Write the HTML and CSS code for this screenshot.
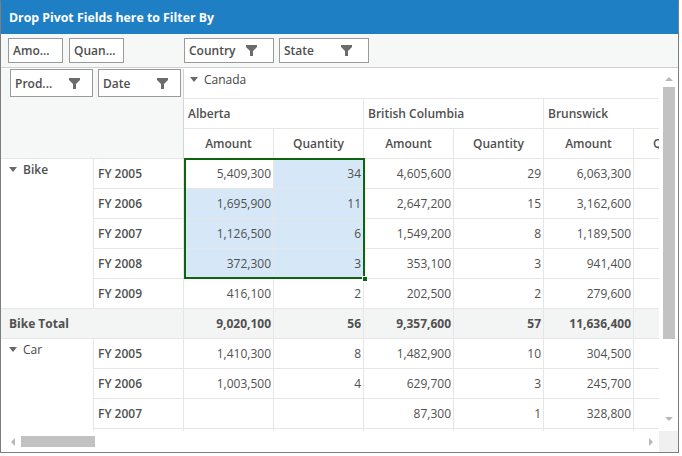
FILE: index.html
```html
<!DOCTYPE html>
<html>
<head>
<meta charset="utf-8">
<link rel="stylesheet" href="styles.css">
</head>
<body>
<div class="pivot">
  <div class="hdr">Drop Pivot Fields here to Filter By</div>
  <div class="filters">
    <div class="grp data-grp">
      <span class="fld w55">Amo...</span>
      <span class="fld w55">Quan...</span>
    </div>
    <div class="grp col-grp">
      <span class="fld w90">Country<svg class="funnel" viewBox="0 0 11 11"><path d="M0 0H11V2L7 6V11H4V6L0 2Z"/></svg></span>
      <span class="fld w90">State<svg class="funnel" viewBox="0 0 11 11"><path d="M0 0H11V2L7 6V11H4V6L0 2Z"/></svg></span>
    </div>
  </div>
  <div class="body">
    <div class="main">
      <div class="viewport">
        <table class="grid">
          <colgroup>
            <col class="c1"><col class="c2">
            <col class="cn"><col class="cn"><col class="cn"><col class="cn"><col class="cn"><col class="cn">
          </colgroup>
          <tr class="r30">
            <td class="corner" rowspan="3" colspan="2">
              <div class="rowflds">
                <span class="fld w83">Prod...<svg class="funnel" viewBox="0 0 11 11"><path d="M0 0H11V2L7 6V11H4V6L0 2Z"/></svg></span>
                <span class="fld w83">Date<svg class="funnel" viewBox="0 0 11 11"><path d="M0 0H11V2L7 6V11H4V6L0 2Z"/></svg></span>
              </div>
            </td>
            <td class="country" colspan="6"><span class="tri"></span>Canada</td>
          </tr>
          <tr class="r30">
            <td class="state" colspan="2">Alberta</td>
            <td class="state" colspan="2">British Columbia</td>
            <td class="state" colspan="2">Brunswick</td>
          </tr>
          <tr class="r30">
            <td class="meas">Amount</td><td class="meas">Quantity</td>
            <td class="meas">Amount</td><td class="meas">Quantity</td>
            <td class="meas">Amount</td><td class="meas">Quantity</td>
          </tr>
          <tr class="r30">
            <td class="prod" rowspan="5"><span class="tri"></span>Bike</td>
            <td class="yr">FY 2005</td>
            <td class="num">5,409,300</td><td class="num sel">34</td>
            <td class="num">4,605,600</td><td class="num">29</td>
            <td class="num">6,063,300</td><td class="num"></td>
          </tr>
          <tr class="r30">
            <td class="yr">FY 2006</td>
            <td class="num sel">1,695,900</td><td class="num sel">11</td>
            <td class="num">2,647,200</td><td class="num">15</td>
            <td class="num">3,162,600</td><td class="num"></td>
          </tr>
          <tr class="r30">
            <td class="yr">FY 2007</td>
            <td class="num sel">1,126,500</td><td class="num sel">6</td>
            <td class="num">1,549,200</td><td class="num">8</td>
            <td class="num">1,189,500</td><td class="num"></td>
          </tr>
          <tr class="r30">
            <td class="yr">FY 2008</td>
            <td class="num sel">372,300</td><td class="num sel">3</td>
            <td class="num">353,100</td><td class="num">3</td>
            <td class="num">941,400</td><td class="num"></td>
          </tr>
          <tr class="r30">
            <td class="yr">FY 2009</td>
            <td class="num">416,100</td><td class="num">2</td>
            <td class="num">202,500</td><td class="num">2</td>
            <td class="num">279,600</td><td class="num"></td>
          </tr>
          <tr class="r30 total">
            <td class="tlabel" colspan="2">Bike Total</td>
            <td class="num">9,020,100</td><td class="num">56</td>
            <td class="num">9,357,600</td><td class="num">57</td>
            <td class="num">11,636,400</td><td class="num"></td>
          </tr>
          <tr class="r30">
            <td class="prod light" rowspan="4"><span class="tri"></span>Car</td>
            <td class="yr">FY 2005</td>
            <td class="num">1,410,300</td><td class="num">8</td>
            <td class="num">1,482,900</td><td class="num">10</td>
            <td class="num">304,500</td><td class="num"></td>
          </tr>
          <tr class="r30">
            <td class="yr">FY 2006</td>
            <td class="num">1,003,500</td><td class="num">4</td>
            <td class="num">629,700</td><td class="num">3</td>
            <td class="num">245,700</td><td class="num"></td>
          </tr>
          <tr class="r30">
            <td class="yr">FY 2007</td>
            <td class="num"></td><td class="num"></td>
            <td class="num">87,300</td><td class="num">1</td>
            <td class="num">328,800</td><td class="num"></td>
          </tr>
          <tr class="r30">
            <td class="yr">FY 2008</td>
            <td class="num"></td><td class="num"></td>
            <td class="num"></td><td class="num"></td>
            <td class="num"></td><td class="num"></td>
          </tr>
        </table>
        <div class="selbox"><span class="handle"></span></div>
      </div>
      <div class="vscroll">
        <span class="arr up"></span>
        <div class="vtrack"><div class="vthumb"></div></div>
        <span class="arr down"></span>
      </div>
    </div>
    <div class="hbar">
      <div class="hscroll">
        <span class="arr left"></span>
        <div class="htrack"><div class="hthumb"></div></div>
        <span class="arr right"></span>
      </div>
      <div class="cornerbox"></div>
    </div>
  </div>
</div>
</body>
</html>
```

FILE: styles.css
```css
* { box-sizing: border-box; }
html, body { margin: 0; padding: 0; background: #fff; }
body { font-family: "Open Sans", "Noto Sans", sans-serif; font-size: 12px; color: #505050; }

.pivot {
  width: 679px;
  height: 453px;
  border: 1px solid #7d7d7d;
  border-top-color: #1f7fc5;
  display: flex;
  flex-direction: column;
  overflow: hidden;
}

.hdr {
  height: 33px;
  flex: none;
  background: #1f7fc5;
  color: #fff;
  font-weight: 700;
  font-size: 12.3px;
  line-height: 33px;
  padding-left: 8px;
}

.filters {
  height: 34px;
  flex: none;
  background: #f6f7f7;
  border-bottom: 1px solid #cfcfcf;
  display: flex;
  align-items: flex-start;
  padding-top: 4px;
}
.grp { display: flex; gap: 6px; }
.data-grp { padding-left: 7px; width: 182px; }
.col-grp { padding-left: 1px; gap: 5px; }

.fld {
  display: flex;
  align-items: center;
  justify-content: space-between;
  height: 25px;
  border: 1px solid #9a9a9a;
  background: #fff;
  font-weight: 600;
  color: #4e4e4e;
  padding: 0 12px 0 4px;
  white-space: nowrap;
}
.w55 { width: 55px; }
.w90 { width: 90px; padding-right: 16px; }
.w83 { width: 83px; height: 28px; }
.funnel { width: 11px; height: 11px; fill: #6b6b6b; flex: none; }

.body { flex: 1; display: flex; flex-direction: column; min-height: 0; }
.main { flex: 1; display: flex; min-height: 0; }
.viewport { position: relative; width: 658px; flex: none; overflow: hidden; }

.grid {
  border-collapse: separate;
  border-spacing: 0;
  table-layout: fixed;
  width: 723px;
  margin-top: 1px;
}
.c1 { width: 93px; }
.c2 { width: 90px; }
.cn { width: 90px; }

.grid td {
  height: 30px;
  padding: 0 4px;
  border-right: 1px solid #e6e6e6;
  border-bottom: 1px solid #e6e6e6;
  white-space: nowrap;
  overflow: hidden;
  vertical-align: middle;
}

.corner {
  background: #f6f7f7;
  vertical-align: top !important;
  padding: 0 !important;
  border-right-color: #d4d4d4 !important;
}
.rowflds { display: flex; gap: 5px; padding-left: 9px; }

.country { vertical-align: top !important; padding-top: 2px !important; padding-left: 6px !important; color: #454545; }
.tri {
  display: inline-block;
  width: 0; height: 0;
  border-left: 4px solid transparent;
  border-right: 4px solid transparent;
  border-top: 5px solid #6a6a6a;
  margin-right: 6px;
  vertical-align: 2px;
}
.state { font-weight: 600; text-align: left; }
.meas { font-weight: 600; text-align: center; }

.prod { vertical-align: top !important; padding: 2px 0 0 8px !important; font-weight: 600; background: #fff; }
.prod.light { font-weight: 400; color: #454545; }
.yr { font-weight: 600; padding-left: 4px !important; }
.num { text-align: right; padding-right: 2px !important; }
.sel { background: #d6e8f7; }

.total td { background: #f3f4f4; font-weight: 700; }
.tlabel { padding-left: 8px !important; }

.selbox {
  position: absolute;
  left: 183px;
  top: 90px;
  width: 181px;
  height: 121px;
  border: 2px solid #0c650c;
  pointer-events: none;
}
.handle {
  position: absolute;
  right: -5px;
  bottom: -5px;
  width: 6px;
  height: 6px;
  background: #0c650c;
  border: 1px solid #fff;
}

.vscroll {
  width: 19px;
  flex: none;
  display: flex;
  flex-direction: column;
  align-items: center;
  padding: 6px 0 4px;
  background: #fff;
}
.vtrack { flex: 1; width: 100%; padding: 6px 3px 0 4px; }
.vthumb { height: 252px; background: #c2c2c2; }

.arr { width: 0; height: 0; flex: none; }
.arr.up { border-left: 4px solid transparent; border-right: 4px solid transparent; border-bottom: 4px solid #b8b8b8; margin-top: 3px; }
.arr.down { border-left: 4px solid transparent; border-right: 4px solid transparent; border-top: 4px solid #b8b8b8; margin-bottom: 6px; }
.arr.left { border-top: 4px solid transparent; border-bottom: 4px solid transparent; border-right: 4px solid #b8b8b8; }
.arr.right { border-top: 4px solid transparent; border-bottom: 4px solid transparent; border-left: 4px solid #b8b8b8; }

.hbar { height: 21px; flex: none; display: flex; }
.hscroll { width: 658px; flex: none; display: flex; align-items: center; padding: 0 6px 0 10px; }
.htrack { flex: 1; height: 11px; padding: 0 5px 0 6px; }
.hthumb { width: 74px; height: 11px; background: #c2c2c2; }
.cornerbox { flex: 1; background: #f0f0f0; }
```
